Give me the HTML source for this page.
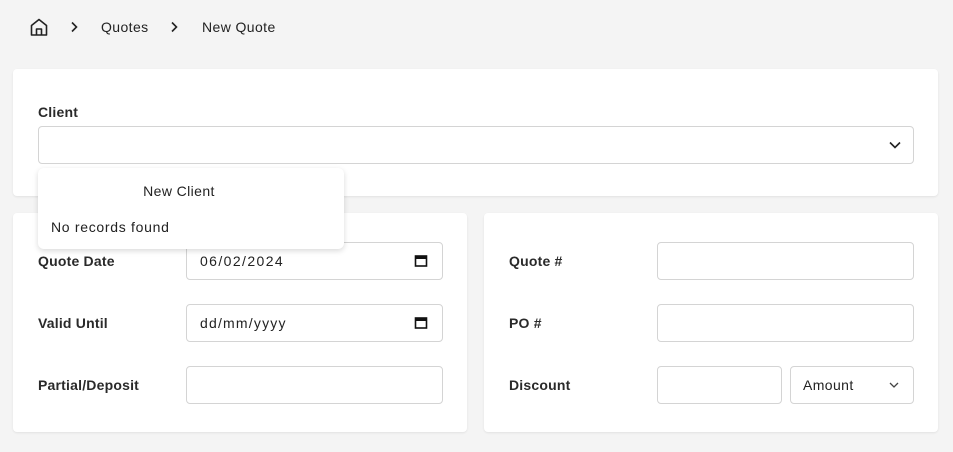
<!DOCTYPE html>
<html><head><style>
body{margin:0;width:953px;height:452px;background:#f4f4f4;font-family:"Liberation Sans",sans-serif;font-size:14px;color:#222;position:relative;overflow:hidden;letter-spacing:0.4px}
.a{position:absolute}
.card{position:absolute;background:#fff;border-radius:4px;box-shadow:0 1px 2px rgba(0,0,0,.08)}
.in{position:absolute;background:#fff;border:1px solid #d4d4d4;border-radius:4px;box-sizing:border-box;height:38px}
.lbl{position:absolute;font-weight:bold;color:#2a2a2a;letter-spacing:0.2px}
.t{position:absolute;line-height:18px}
</style></head><body>
<svg class="a" style="left:29px;top:17px" width="20" height="20" viewBox="0 0 20 20" fill="none" stroke="#222" stroke-width="1.6" stroke-linejoin="round"><path d="M2.5 8.5L10 2.5l7.5 6V18h-15z"/><path d="M7.5 18v-6h5v6"/></svg>
<svg class="a" style="left:69px;top:21px" width="10" height="12" viewBox="0 0 10 12" fill="none" stroke="#222" stroke-width="1.6"><path d="M3 1.5l4.5 4.5-4.5 4.5"/></svg>
<div class="t" style="left:101px;top:18px">Quotes</div>
<svg class="a" style="left:169px;top:21px" width="10" height="12" viewBox="0 0 10 12" fill="none" stroke="#222" stroke-width="1.6"><path d="M3 1.5l4.5 4.5-4.5 4.5"/></svg>
<div class="t" style="left:202px;top:18px">New Quote</div>

<div class="card" style="left:13px;top:69px;width:925px;height:127px"></div>
<div class="lbl" style="left:38px;top:104px">Client</div>
<div class="in" style="left:38px;top:126px;width:876px"></div>
<svg class="a" style="left:888px;top:139px" width="14" height="12" viewBox="0 0 14 12" fill="none" stroke="#222" stroke-width="1.6"><path d="M2 3.5l5 5 5-5"/></svg>

<div class="card" style="left:13px;top:213px;width:454px;height:219px"></div>
<div class="card" style="left:484px;top:213px;width:454px;height:219px"></div>

<div class="lbl" style="left:38px;top:253px">Quote Date</div>
<div class="in" style="left:186px;top:242px;width:257px"></div>
<div class="t" style="left:200px;top:252px;letter-spacing:1.4px">06/02/2024</div>
<div class="lbl" style="left:38px;top:315px">Valid Until</div>
<div class="in" style="left:186px;top:304px;width:257px"></div>
<div class="t" style="left:200px;top:314px;letter-spacing:1.2px">dd/mm/yyyy</div>
<svg class="a" style="left:414px;top:254px" width="14" height="14" viewBox="0 0 14 14"><rect x="1.5" y="2" width="11" height="10" fill="none" stroke="#111" stroke-width="1.6"/><rect x="1.5" y="2" width="11" height="3" fill="#111"/></svg>
<svg class="a" style="left:414px;top:316px" width="14" height="14" viewBox="0 0 14 14"><rect x="1.5" y="2" width="11" height="10" fill="none" stroke="#111" stroke-width="1.6"/><rect x="1.5" y="2" width="11" height="3" fill="#111"/></svg>
<div class="lbl" style="left:38px;top:377px">Partial/Deposit</div>
<div class="in" style="left:186px;top:366px;width:257px"></div>

<div class="lbl" style="left:509px;top:253px">Quote #</div>
<div class="in" style="left:657px;top:242px;width:257px"></div>
<div class="lbl" style="left:509px;top:315px">PO #</div>
<div class="in" style="left:657px;top:304px;width:257px"></div>
<div class="lbl" style="left:509px;top:377px">Discount</div>
<div class="in" style="left:657px;top:366px;width:125px"></div>
<div class="in" style="left:790px;top:366px;width:124px"></div>
<div class="t" style="left:803px;top:376px">Amount</div>
<svg class="a" style="left:888px;top:380px" width="12" height="10" viewBox="0 0 12 10" fill="none" stroke="#444" stroke-width="1.3"><path d="M2 3l4 4 4-4"/></svg>

<div class="a" style="left:38px;top:168px;width:306px;height:81px;background:#fff;border-radius:6px;box-shadow:0 2px 6px rgba(0,0,0,.15)"></div>
<div class="t" style="left:38px;top:182px;width:282px;text-align:center">New Client</div>
<div class="t" style="left:51px;top:218px;letter-spacing:0.7px">No records found</div>
</body></html>
